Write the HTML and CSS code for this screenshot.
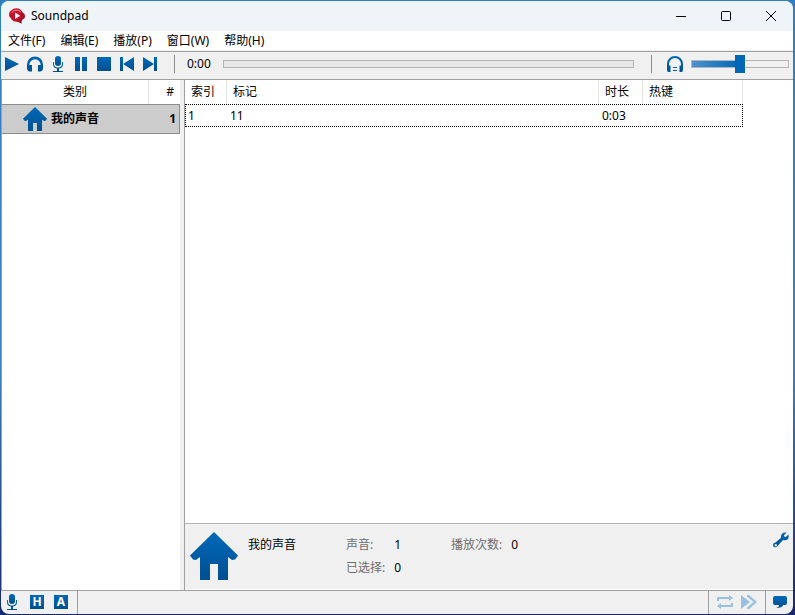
FILE: index.html
```html
<!DOCTYPE html>
<html lang="zh-CN">
<head>
  <meta charset="UTF-8">
  <meta name="viewport" content="width=device-width, initial-scale=1.0">
  <title>Soundpad</title>
  <link rel="stylesheet" href="styles.css">
</head>
<body>
  <svg class="defs" aria-hidden="true">
    <defs>
      <linearGradient id="blue" x1="0" y1="0" x2="0" y2="1">
        <stop offset="0" stop-color="#0068ba"/>
        <stop offset="1" stop-color="#00508f"/>
      </linearGradient>
      <linearGradient id="red" x1="0" y1="0" x2="1" y2="1">
        <stop offset="0" stop-color="#e0102c"/>
        <stop offset="1" stop-color="#8e1024"/>
      </linearGradient>
      <symbol id="mic" viewBox="0 0 16 16">
        <rect x="5" y="0" width="6" height="10" rx="3"/>
        <path d="M3 6h1v2c0 2.200 1.600 3.400 4 3.400s4-1.200 4-3.400V6h1v2.300c0 2.400-1.500 4-4 4.300V15h4v1H3v-1h4v-2.400c-2.500-.3-4-1.900-4-4.300z"/>
      </symbol>
      <symbol id="home" viewBox="0 0 48 48">
        <path d="M24 0 48 23.5 45 27.5 42 28 38 25V48H28V32H20V48H10V25L6 28 3 27.5 0 23.5z"/>
      </symbol>
      <symbol id="headphones" viewBox="0 0 16 16">
        <path d="M0 8.500a8 8 0 0 1 16 0v3.500c0 2-1 3.500-3 3.500h-2V9h2.700A5.700 5.700 0 0 0 2.300 9H5v6.500H3c-2 0-3-1.500-3-3.500z"/>
      </symbol>
    </defs>
  </svg>

  <div class="window">
    <header class="titlebar">
      <svg class="logo" viewBox="0 0 16 16">
        <path fill="url(#red)" d="M4.500.8C8-.8 12.500.8 13.600 4.500l1.500 1c1.200 1.500 1.200 4-.1 5.300l-1.500.6c-.3.700-.6 1.200-1 1.600l.3 2.800-3.800-1.800C5 14 2.200 12 1.600 9.800L.3 8.500C-.3 6 .2 3.800 1.600 3.100z"/>
        <path fill="none" stroke="#f3b9c1" stroke-width=".8" d="M2.800 4.800C4.500 1.800 9 1 12 4.300"/>
        <circle cx="8" cy="7.800" r="4.600" fill="#c8102c"/>
        <path fill="#fff" d="M6 4.600v6.400L11.200 7.800z"/>
      </svg>
      <h1>Soundpad</h1>
      <div class="window-buttons">
        <button type="button" aria-label="最小化"><svg viewBox="0 0 12 12"><path d="M1 6.500h10"/></svg></button>
        <button type="button" aria-label="最大化"><svg viewBox="0 0 12 12"><rect x="1.500" y="1.500" width="9" height="9" rx="1"/></svg></button>
        <button type="button" aria-label="关闭"><svg viewBox="0 0 12 12"><path d="M1 1l10 10M11 1 1 11"/></svg></button>
      </div>
    </header>

    <nav class="menu">
      <button type="button">文件(F)</button>
      <button type="button">编辑(E)</button>
      <button type="button">播放(P)</button>
      <button type="button">窗口(W)</button>
      <button type="button">帮助(H)</button>
    </nav>

    <div class="toolbar">
      <div class="player-buttons">
        <button type="button" aria-label="播放"><svg viewBox="0 0 16 16"><path d="M1 1v14l14-7z"/></svg></button>
        <button type="button" aria-label="在耳机中播放"><svg viewBox="0 0 16 16"><use href="#headphones"/></svg></button>
        <button type="button" aria-label="在麦克风中播放"><svg viewBox="0 0 16 16"><use href="#mic"/></svg></button>
        <button type="button" aria-label="暂停"><svg viewBox="0 0 16 16"><path d="M2 1h5v14H2zM9 1h5v14H9z"/></svg></button>
        <button type="button" aria-label="停止"><svg viewBox="0 0 16 16"><path d="M1 1h14v14H1z"/></svg></button>
        <button type="button" aria-label="上一个"><svg viewBox="0 0 16 16"><path d="M1 1h3v14H1zM15 1v14L4 8z"/></svg></button>
        <button type="button" aria-label="下一个"><svg viewBox="0 0 16 16"><path d="M12 1h3v14h-3zM1 1v14l11-7z"/></svg></button>
      </div>
      <span class="divider"></span>
      <span class="time">0:00</span>
      <progress class="position" value="0" max="100" aria-label="播放进度"></progress>
      <span class="divider"></span>
      <label class="volume-icon" for="volume" aria-label="音量">
        <svg viewBox="0 0 16 16">
          <path d="M0 8a8 8 0 0 1 16 0v5c0 2-.5 3-1.500 3H12.500V9.500h1.500V8a6 6 0 0 0-12 0v1.500h1.500V16H1.500C.5 16 0 15 0 13z"/>
          <path d="M6 11h4v1H6zM6 14h4v1H6z"/>
        </svg>
      </label>
      <input class="volume" id="volume" type="range" min="0" max="100" value="50">
    </div>

    <div class="body">
      <aside class="sidebar">
        <table class="categories">
          <colgroup><col><col class="col-count"></colgroup>
          <thead>
            <tr><th>类别</th><th>#</th></tr>
          </thead>
          <tbody>
            <tr>
              <td><div class="category"><svg viewBox="0 0 48 48"><use href="#home"/></svg>我的声音</div></td>
              <td>1</td>
            </tr>
          </tbody>
        </table>
      </aside>

      <main class="content">
        <div class="sound-list">
          <table class="sounds">
            <colgroup><col class="col-index"><col><col class="col-time"><col class="col-key"></colgroup>
            <thead>
              <tr><th>索引</th><th>标记</th><th>时长</th><th>热键</th></tr>
            </thead>
            <tbody>
              <tr><td>1</td><td>11</td><td>0:03</td><td></td></tr>
            </tbody>
          </table>
        </div>

        <section class="details">
          <svg class="details-icon" viewBox="0 0 48 48"><use href="#home"/></svg>
          <h2>我的声音</h2>
          <dl class="stats">
            <dt>声音:</dt><dd>1</dd>
            <dt>已选择:</dt><dd>0</dd>
          </dl>
          <dl class="stats plays">
            <dt>播放次数:</dt><dd>0</dd>
          </dl>
          <button class="settings" type="button" aria-label="设置">
            <svg viewBox="0 0 16 16"><path d="M13.500.8 11 3.200l.4 1.500 1.500.4L15.300 2.600C16.500 5 15 8.300 12 8.300c-.8 0-1.400-.2-1.900-.4L5 13.500C3.700 16 .3 15.900.1 13.200 0 11.700 1.300 10.800 2.500 10.500L8 5.800C7.200 2.800 10.200-.4 13.500.8zM2.800 12a1.200 1.200 0 1 0 0 2.400 1.200 1.200 0 0 0 0-2.400z"/></svg>
          </button>
        </section>
      </main>
    </div>

    <footer class="statusbar">
      <div class="status-group modes">
        <button type="button" aria-label="麦克风"><svg viewBox="0 0 16 16"><use href="#mic"/></svg></button>
        <button class="letter" type="button">H</button>
        <button class="letter" type="button">A</button>
      </div>
      <div class="status-group repeat">
        <button type="button" aria-label="循环" disabled><svg viewBox="0 0 16 14"><path d="M0 6V3q0-1 1-1h11V0l4 3-4 3V4H2v2zM16 8v3q0 1-1 1H4v2l-4-3 4-3v2h10V8z"/></svg></button>
        <button type="button" aria-label="连续播放" disabled><svg viewBox="0 0 16 14"><path d="M0 0v14l9-7zM6 0h2l8 7-8 7H6V12.500L12.500 7 6 1.500z"/></svg></button>
      </div>
      <div class="status-group chat">
        <button type="button" aria-label="消息"><svg viewBox="0 0 14 14"><path d="M2 1h10a2 2 0 0 1 2 2v5a2 2 0 0 1-2 2h-2c0 2-3 3-7 3 2-.5 3-1.500 3-3H2a2 2 0 0 1-2-2V3a2 2 0 0 1 2-2z"/></svg></button>
      </div>
    </footer>
  </div>
</body>
</html>
```

FILE: styles.css
```css
* {
  box-sizing: border-box;
}
body {
  margin: 0;
  height: 100vh;
  padding: 1px 2px 1px 1px;
  display: flex;
  background: linear-gradient(180deg, #2f7fc0 0%, #3d7fc4 60%, #16286e 100%);
  font-family: "Noto Sans", "Noto Sans CJK SC", sans-serif;
  font-size: 12px;
  line-height: 16px;
  color: #000;
}
button {
  margin: 0;
  padding: 0;
  border: 0;
  background: none;
  font: inherit;
  color: inherit;
}
svg {
  display: block;
  fill: url(#blue);
}
h1, h2 {
  margin: 0;
  font-size: 12px;
  font-weight: normal;
}
table {
  width: 100%;
  border-collapse: separate;
  border-spacing: 0;
  table-layout: fixed;
}
th, td {
  padding: 0;
  font-weight: normal;
  text-align: left;
}
.defs {
  position: absolute;
  width: 0;
  height: 0;
}
.window {
  flex: 1;
  min-width: 0;
  display: flex;
  flex-direction: column;
  background: #f0f0f0;
  border-radius: 8px;
  overflow: hidden;
}

/* Title bar and menu */
.titlebar {
  display: flex;
  align-items: center;
  height: 30px;
  padding-left: 8px;
  background: #eff4f9;
}
.logo {
  width: 16px;
  height: 16px;
  margin-right: 6px;
}
.window-buttons {
  display: flex;
  margin-left: auto;
}
.window-buttons button {
  width: 45px;
  height: 28px;
  display: flex;
  align-items: center;
  justify-content: center;
}
.window-buttons svg {
  width: 12px;
  height: 12px;
  fill: none;
  stroke: #000;
}
.menu {
  display: flex;
  height: 19px;
  padding-left: 7px;
  gap: 15px;
  background: #fff;
}

/* Toolbar */
.toolbar {
  display: flex;
  align-items: center;
  height: 29px;
  margin-top: 1px;
  padding: 0 4px 3px 0;
  border-top: 1px solid #a0a0a0;
  border-bottom: 1px solid #a0a0a0;
}
.toolbar svg {
  width: 16px;
  height: 16px;
}
.player-buttons {
  display: flex;
}
.player-buttons button {
  width: 23px;
  height: 18px;
  padding-right: 1px;
  display: flex;
  align-items: center;
  justify-content: center;
}
.divider {
  width: 1px;
  height: 18px;
  margin: 0 12px;
  background: #8c8c8c;
}
.time {
  width: 36px;
}
.position {
  flex: 1;
  min-width: 0;
  height: 8px;
  margin-right: 5px;
  appearance: none;
  border: 1px solid #b4b4b4;
}
.position::-webkit-progress-bar {
  background: #e8e8e8;
}
.position::-webkit-progress-value {
  background: #0066b8;
}
.volume-icon {
  margin: 0 8px 0 3px;
}
.volume {
  width: 98px;
  height: 18px;
  margin: 0;
  appearance: none;
  background: none;
}
.volume::-webkit-slider-runnable-track {
  height: 8px;
  border: 1px solid #b4b4b4;
  background: linear-gradient(90deg, #4a92cf, #0066b8 50%, #f0f0f0 50%);
}
.volume::-webkit-slider-thumb {
  appearance: none;
  width: 10px;
  height: 18px;
  margin-top: -6px;
  background: #0066b8;
}

/* Category list */
.body {
  flex: 1;
  min-height: 0;
  display: flex;
  gap: 4px;
}
.sidebar {
  width: 179px;
  border-left: 1px solid #a0a0a0;
  background: #fff;
}
.col-count {
  width: 32px;
}
.categories th {
  height: 24px;
  text-align: center;
}
.categories th:last-child {
  padding-right: 6px;
  border-left: 1px solid #e5e5e5;
  text-align: right;
}
.categories td {
  height: 30px;
  border: 1px solid #8c8c8c;
  border-width: 1px 0;
  background: #ccc;
  font-weight: bold;
}
.categories td:last-child {
  padding-right: 3px;
  border-right-width: 1px;
  text-align: right;
}
.category {
  display: flex;
  align-items: center;
  gap: 4px;
  padding-left: 21px;
}
.category svg {
  width: 24px;
  height: 24px;
}

/* Sound list */
.content {
  flex: 1;
  min-width: 0;
  display: flex;
  flex-direction: column;
  border-left: 1px solid #a0a0a0;
}
.sound-list {
  flex: 1;
  padding-right: 50px;
  background: #fff;
}
.col-index {
  width: 42px;
}
.col-time {
  width: 44px;
}
.col-key {
  width: 100px;
}
.sounds th {
  height: 24px;
  padding-left: 6px;
  border-right: 1px solid #e5e5e5;
}
.sounds td {
  height: 23px;
  padding-left: 3px;
}
.sounds tbody tr {
  outline: 1px dotted #000;
  outline-offset: -1px;
}

/* Details of the selected category */
.details {
  display: flex;
  align-items: flex-start;
  height: 67px;
  padding: 8px 4px 0 5px;
  border-top: 1px solid #b4b4b4;
  border-bottom: 1px solid #fff;
}
.details-icon {
  width: 48px;
  height: 48px;
}
.details h2 {
  width: 98px;
  margin: 5px 0 0 10px;
}
.stats {
  display: grid;
  grid-template-columns: auto auto;
  column-gap: 9px;
  row-gap: 7px;
  margin: 5px 0 0;
}
.plays {
  margin-left: 50px;
}
.stats dt {
  color: #6d6d6d;
}
.stats dd {
  margin: 0;
}
.settings {
  margin-left: auto;
}
.settings svg {
  width: 16px;
  height: 16px;
}

/* Status bar */
.statusbar {
  display: flex;
  height: 24px;
  border-top: 1px solid #a0a0a0;
}
.status-group {
  display: flex;
  align-items: center;
  padding-bottom: 1px;
}
.status-group svg {
  width: 16px;
  height: 16px;
}
.modes {
  gap: 10px;
  width: 77px;
  padding-left: 3px;
  margin-right: auto;
  border-right: 1px solid #a0a0a0;
}
.letter {
  width: 14px;
  height: 14px;
  background: linear-gradient(#0068ba, #00508f);
  color: #fff;
  font-weight: bold;
  line-height: 14px;
  text-align: center;
}
.repeat {
  gap: 8px;
  padding-left: 8px;
  padding-right: 8px;
  border-left: 1px solid #a0a0a0;
}
.repeat svg {
  fill: #99c0e0;
}
.chat {
  padding-left: 7px;
  padding-right: 6px;
  border-left: 1px solid #a0a0a0;
}
.chat svg {
  width: 14px;
  height: 14px;
}
```
